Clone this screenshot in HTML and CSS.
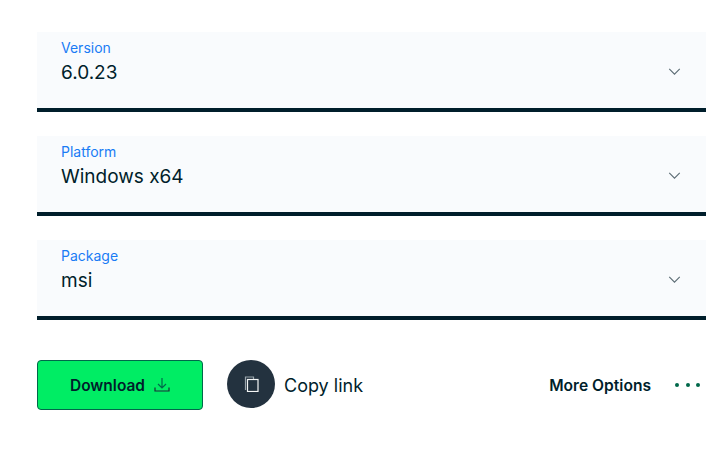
FILE: index.html
```html
<!DOCTYPE html>
<html lang="en">
<head>
<meta charset="UTF-8">
<meta name="viewport" content="width=device-width, initial-scale=1.0">
<title>Download</title>
<link rel="stylesheet" href="styles.css">
</head>
<body>

<div class="panel">
    <div class="select-box">
        <div class="select-text">
            <div class="select-label">Version</div>
            <div class="select-value">6.0.23</div>
        </div>
        <svg class="chevron" width="14" height="8" viewBox="0 0 14 8"><path d="M1 1l6 6 6-6"/></svg>
    </div>

    <div class="select-box">
        <div class="select-text">
            <div class="select-label">Platform</div>
            <div class="select-value">Windows x64</div>
        </div>
        <svg class="chevron" width="14" height="8" viewBox="0 0 14 8"><path d="M1 1l6 6 6-6"/></svg>
    </div>

    <div class="select-box">
        <div class="select-text">
            <div class="select-label">Package</div>
            <div class="select-value">msi</div>
        </div>
        <svg class="chevron" width="14" height="8" viewBox="0 0 14 8"><path d="M1 1l6 6 6-6"/></svg>
    </div>

    <div class="actions">
        <a class="download-btn" href="#">
            Download
            <svg class="download-icon" width="16" height="16" viewBox="0 0 16 16"><path class="arrow" d="M8 1v10M4 7l4 4 4-4"/><path d="M1 10.500v3.500h14v-3.500"/></svg>
        </a>
        <a class="copy-link" href="#">
            <span class="copy-circle">
                <svg class="copy-icon" width="16" height="16" viewBox="0 0 16 16"><path class="copy-back" d="M2.500 14V1h8v2"/><rect x="4.500" y="3.500" width="10.500" height="12"/></svg>
            </span>
            <span class="copy-text">Copy link</span>
        </a>
        <a class="more-options" href="#">
            More Options
            <span class="dots"><span class="dot"></span><span class="dot"></span><span class="dot"></span></span>
        </a>
    </div>
</div>

</body>
</html>
```

FILE: styles.css
```css
body {
    margin: 0;
    font-family: Inter, "Noto Sans", sans-serif;
    background-color: white;
    color: #001e2b;
}

.panel {
    width: 669px;
    margin-left: 37px;
    padding-top: 32px;
}

.select-box {
    display: flex;
    align-items: center;
    justify-content: space-between;
    height: 76px;
    margin-bottom: 24px;
    padding: 0 24px;
    background-color: #f9fbfd;
    border-bottom: 4px solid #001e2b;
}

.select-text {
    align-self: flex-start;
    padding-top: 8px;
}

.select-label {
    font-size: 14px;
    line-height: 16px;
    color: #1a7cf5;
}

.select-value {
    font-size: 19px;
    line-height: 34px;
}

.chevron {
    margin-top: 3px;
    margin-right: 1px;
    width: 13px;
    height: 7px;
    fill: none;
    stroke: #5c6c75;
    stroke-width: 1.300;
}

.actions {
    display: flex;
    align-items: center;
    margin-top: 40px;
}

.actions a {
    text-decoration: none;
    color: #001e2b;
}

.download-btn {
    display: flex;
    align-items: center;
    justify-content: center;
    gap: 9px;
    box-sizing: border-box;
    width: 166px;
    height: 50px;
    background-color: #00ed64;
    border: 1px solid #00684a;
    border-radius: 4px;
    font-size: 15.500px;
    font-weight: 600;
}

.download-icon {
    fill: none;
    stroke: #1c2d38;
    stroke-width: 1.200;
}

.download-icon .arrow {
    stroke: #00684a;
}

.copy-link {
    display: flex;
    align-items: center;
    gap: 9px;
    margin-left: 24px;
    margin-bottom: 2px;
    font-size: 18px;
}

.copy-text {
    margin-top: 2px;
}

.copy-circle {
    display: flex;
    align-items: center;
    justify-content: center;
    width: 48px;
    height: 48px;
    border-radius: 50%;
    background-color: #23323f;
}

.copy-icon {
    fill: none;
    stroke: #f4f6f6;
    stroke-width: 1.200;
}

.copy-icon .copy-back {
    stroke: #9aa5ac;
}

.more-options {
    display: flex;
    align-items: center;
    gap: 24px;
    margin-left: auto;
    margin-right: 6px;
    font-size: 15.600px;
    font-weight: 600;
}

.dots {
    display: flex;
    gap: 6.500px;
}

.dot {
    width: 4px;
    height: 4px;
    border-radius: 50%;
    background-color: #00684a;
}
```
